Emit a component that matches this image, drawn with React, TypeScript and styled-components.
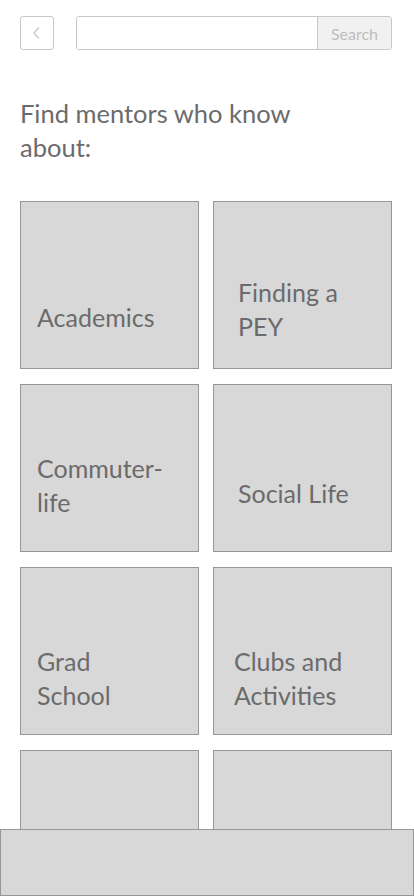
import React from "react";
import styled, { createGlobalStyle } from "styled-components";

const Global = createGlobalStyle`
  html, body { margin: 0; padding: 0; background: #ffffff; }
  body { font-family: Lato, "Noto Sans", sans-serif; }
  * { box-sizing: border-box; }
`;

const Page = styled.div`
  width: 414px;
  min-height: 896px;
  padding: 16px 22px 0 20px;
  position: relative;
`;

const TopBar = styled.div`
  display: flex;
  align-items: center;
  gap: 22px;
  height: 34px;
`;

const BackButton = styled.button`
  width: 34px;
  height: 34px;
  flex: none;
  border: 1px solid #c8c8c8;
  border-radius: 3px;
  background: #ffffff;
  padding: 0;
  display: flex;
  align-items: center;
  justify-content: center;
`;

const SearchBox = styled.div`
  flex: 1;
  display: flex;
  height: 34px;
  border: 1px solid #c8c8c8;
  border-radius: 3px;
  overflow: hidden;
`;

const SearchInput = styled.input`
  flex: 1;
  min-width: 0;
  border: none;
  outline: none;
  background: #ffffff;
`;

const SearchButton = styled.button`
  width: 74px;
  flex: none;
  border: none;
  border-left: 1px solid #c8c8c8;
  background: #f1f1f1;
  color: #bdbdbd;
  font-family: Lato, "Noto Sans", sans-serif;
  font-size: 16px;
  padding: 0;
`;

const Heading = styled.h1`
  margin: 46px 0 0 0;
  font-weight: 400;
  font-size: 25.5px;
  line-height: 34px;
  color: #6b6b6b;
  width: 290px;
`;

const Grid = styled.div`
  margin-top: 37px;
  display: grid;
  grid-template-columns: 179px 179px;
  column-gap: 14px;
  row-gap: 15px;
  padding-bottom: 20px;
`;

const Card = styled.div<{ $pb: number; $pl: number }>`
  height: 168px;
  background: #d8d8d8;
  border: 1px solid #979797;
  display: flex;
  flex-direction: column;
  justify-content: flex-end;
  padding: 0 8px ${(p) => p.$pb}px ${(p) => p.$pl}px;
`;

const CardLabel = styled.div`
  max-width: 126px;
  font-size: 25px;
  line-height: 34px;
  color: #6b6b6b;
`;

const BottomBar = styled.div`
  position: fixed;
  left: 0;
  right: 0;
  bottom: 0;
  height: 67px;
  background: #d8d8d8;
  border: 1px solid #979797;
`;

const cards = [
  { label: "Academics", pb: 34, pl: 16 },
  { label: "Finding a PEY", pb: 25, pl: 24 },
  { label: "Commuter-life", pb: 32, pl: 16 },
  { label: "Social Life", pb: 41, pl: 24 },
  { label: "Grad School", pb: 22, pl: 16 },
  { label: "Clubs and Activities", pb: 22, pl: 20 },
  { label: "", pb: 22, pl: 16 },
  { label: "", pb: 22, pl: 20 },
];

export default function App() {
  return (
    <>
      <Global />
      <Page>
        <TopBar>
          <BackButton aria-label="Back">
            <svg width="10" height="14" viewBox="0 0 10 14">
              <path d="M7 1.5 L2 7 L7 12.5" fill="none" stroke="#c4c4c4" strokeWidth="1.2" />
            </svg>
          </BackButton>
          <SearchBox>
            <SearchInput />
            <SearchButton>Search</SearchButton>
          </SearchBox>
        </TopBar>
        <Heading>Find mentors who know about:</Heading>
        <Grid>
          {cards.map((c, i) => (
            <Card key={i} $pb={c.pb} $pl={c.pl}>
              {c.label && <CardLabel>{c.label}</CardLabel>}
            </Card>
          ))}
        </Grid>
        <BottomBar />
      </Page>
    </>
  );
}
